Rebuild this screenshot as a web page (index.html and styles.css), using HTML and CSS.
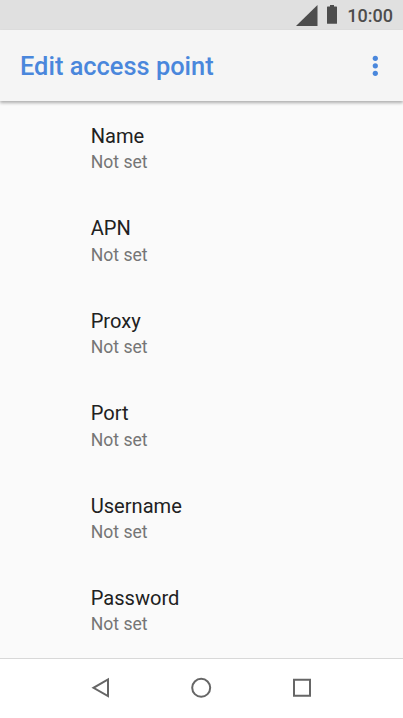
FILE: index.html
```html
<!DOCTYPE html>
<html lang="en">
  <head>
    <meta charset="utf-8" />
    <title>Edit access point</title>
    <link rel="stylesheet" href="styles.css">
  </head>

  <body>
    <div class="status-bar">
      <svg class="signal" width="22" height="21" viewBox="0 0 22 21"><path d="M0 21L21.5 0V21z"/></svg>
      <svg class="battery" width="10" height="19" viewBox="0 0 10 19"><path d="M3 0h4v1.500h2.400a.6.6 0 0 1 .6.6V18.200a.6.6 0 0 1-.6.6H.6a.6.6 0 0 1-.6-.6V2.100a.6.6 0 0 1 .6-.6H3z"/></svg>
      <span class="clock">10:00</span>
    </div>

    <header class="toolbar">
      <h1>Edit access point</h1>
      <svg class="more" width="6" height="22" viewBox="0 0 6 22">
        <circle cx="3.300" cy="3.300" r="2.600"/>
        <circle cx="3.300" cy="10.800" r="2.600"/>
        <circle cx="3.300" cy="18.300" r="2.600"/>
      </svg>
    </header>

    <main class="settings">
      <div class="item"><div class="title">Name</div><div class="summary">Not set</div></div>
      <div class="item"><div class="title">APN</div><div class="summary">Not set</div></div>
      <div class="item"><div class="title">Proxy</div><div class="summary">Not set</div></div>
      <div class="item"><div class="title">Port</div><div class="summary">Not set</div></div>
      <div class="item"><div class="title">Username</div><div class="summary">Not set</div></div>
      <div class="item"><div class="title">Password</div><div class="summary">Not set</div></div>
    </main>

    <nav class="nav-bar">
      <svg width="22" height="22" viewBox="0 0 22 22"><path d="M18 2.500V19L3.500 10.800z"/></svg>
      <svg width="22" height="22" viewBox="0 0 22 22"><circle cx="10.200" cy="10.800" r="9"/></svg>
      <svg width="22" height="22" viewBox="0 0 22 22"><path d="M3 2.800h16v16H3z"/></svg>
    </nav>
  </body>
</html>
```

FILE: styles.css
```css
body {
  margin: 0;
  height: 718px;
  display: flex;
  flex-direction: column;
  overflow: hidden;
  background-color: #fafafa;
  font-family: Roboto, sans-serif;
}
.status-bar {
  box-sizing: border-box;
  flex: none;
  height: 30px;
  padding: 5px 10px 0 0;
  display: flex;
  align-items: flex-start;
  justify-content: flex-end;
  background-color: #e0e0e0;
  color: #4d4d4d;
}
.status-bar svg {
  fill: #4d4d4d;
}
.battery {
  margin: 0 10px 0 9px;
}
.clock {
  font-size: 18px;
  line-height: 21px;
  font-weight: 500;
}
.toolbar {
  box-sizing: border-box;
  flex: none;
  height: 71px;
  padding: 0 25px 0 20px;
  display: flex;
  align-items: center;
  justify-content: space-between;
  background-color: #f5f5f5;
  box-shadow: 0 2px 3px rgba(0,0,0,0.3);
}
.toolbar h1 {
  margin: 0;
  font-size: 25.4px;
  font-weight: 500;
  color: #4a87dc;
}
.more {
  fill: #4a87dc;
}
.settings {
  flex: 1;
  min-height: 0;
  padding: 22px 0 0 90.7px;
}
.item {
  height: 92.45px;
}
.title {
  font-size: 20.1px;
  line-height: 26px;
  color: #212121;
}
.summary {
  margin-top: 0.3px;
  font-size: 17.6px;
  line-height: 26px;
  color: #757575;
}
.nav-bar {
  box-sizing: border-box;
  flex: none;
  height: 60px;
  padding: 0 90px 1px;
  display: flex;
  align-items: center;
  justify-content: space-between;
  border-top: 1px solid #d8d8d8;
  background-color: #fff;
}
.nav-bar svg {
  fill: none;
  stroke: #666;
  stroke-width: 2;
}
```
